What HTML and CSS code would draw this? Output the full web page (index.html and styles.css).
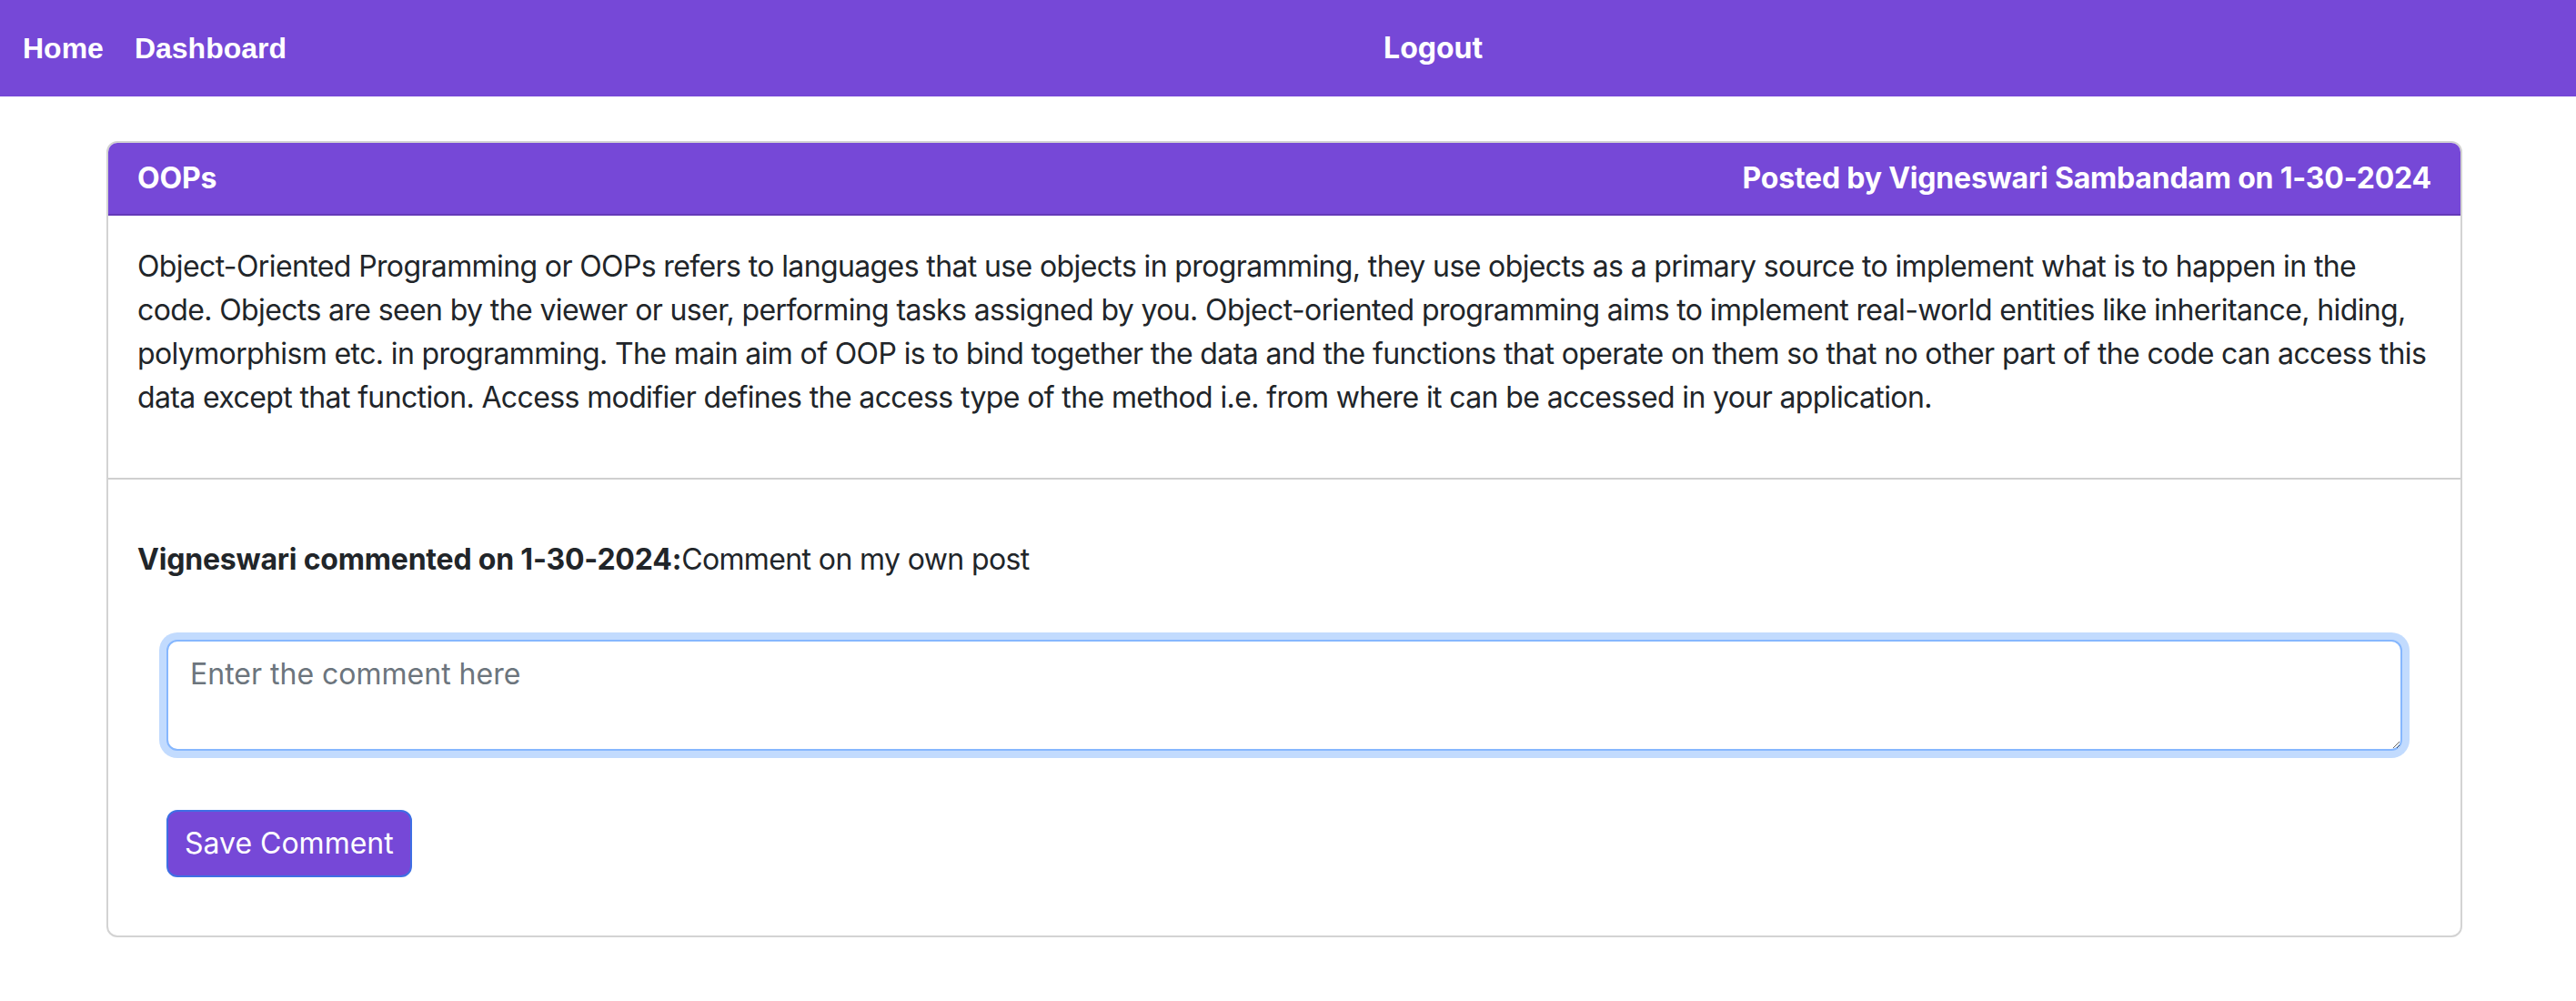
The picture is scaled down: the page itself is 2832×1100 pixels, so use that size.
FILE: index.html
```html
<!DOCTYPE html>
<html lang="en">
<head>
<meta charset="utf-8">
<title>OOPs</title>
<link rel="stylesheet" href="styles.css">
</head>
<body>
<nav class="topbar">
  <div class="nav-left">
    <a class="nav-link" href="#">Home</a>
    <a class="nav-link" href="#">Dashboard</a>
  </div>
  <a class="nav-logout" href="#">Logout</a>
</nav>
<main class="page">
  <section class="card">
    <header class="card-header">
      <span class="post-title">OOPs</span>
      <span class="post-meta">Posted by Vigneswari Sambandam on 1-30-2024</span>
    </header>
    <div class="card-body">
      <p class="post-text">Object-Oriented Programming or OOPs refers to languages that use objects in programming, they use objects as a primary source to implement what is to happen in the<br>code. Objects are seen by the viewer or user, performing tasks assigned by you. Object-oriented programming aims to implement real-world entities like inheritance, hiding,<br>polymorphism etc. in programming. The main aim of OOP is to bind together the data and the functions that operate on them so that no other part of the code can access this<br>data except that function. Access modifier defines the access type of the method i.e. from where it can be accessed in your application.</p>
    </div>
    <div class="card-footer">
      <p class="comment"><strong>Vigneswari commented on 1-30-2024:</strong>Comment on my own post</p>
      <form class="comment-form">
        <textarea class="comment-input" rows="2" placeholder="Enter the comment here" autofocus></textarea>
        <button type="button" class="btn-save">Save Comment</button>
      </form>
    </div>
  </section>
</main>
</body>
</html>
```
FILE: styles.css
```css
* { box-sizing: border-box; }
html, body { margin: 0; padding: 0; background: #fff; }
body {
  font-family: Inter, "Noto Sans", sans-serif;
  font-size: 32px;
  line-height: 48px;
  letter-spacing: -0.62px;
  color: #212529;
}
strong, b { letter-spacing: -0.2px; }
.topbar {
  height: 106px;
  background: #7648d7;
  display: flex;
  align-items: center;
  padding-left: 25px;
}
.nav-left { display: flex; gap: 34px; }
.nav-link {
  font-family: "Liberation Sans", Arial, sans-serif;
  font-weight: 700;
  letter-spacing: 0;
  color: #fff;
  text-decoration: none;
}
.nav-logout {
  margin-left: 1206px;
  font-weight: 700;
  letter-spacing: 0;
  color: #fff;
  text-decoration: none;
}
.page { padding: 49px 125px 0 117px; }
.card {
  border: 2px solid #d3d3d3;
  border-radius: 12px;
  overflow: hidden;
}
.card-header {
  background: #7648d7;
  color: #fff;
  font-weight: 700;
  letter-spacing: -0.2px;
  height: 80px;
  padding: 0 32px;
  display: flex;
  align-items: center;
  justify-content: space-between;
  border-bottom: 2px solid #6439b8;
}
.card-body { padding: 32px; border-bottom: 2px solid #cfcfcf; }
.post-text { margin: 0 -28px 32px 0; }
.card-footer { padding: 32px; }
.comment { margin: 32px 0; }
.comment-form { padding: 32px; display: flex; flex-direction: column; align-items: flex-start; gap: 65px; }
.comment-input {
  width: 100%;
  height: 122px;
  display: block;
  font: inherit;
  color: #212529;
  padding: 12px 24px;
  border: 2px solid #86b7fe;
  border-radius: 12px;
  box-shadow: 0 0 0 8px rgba(13, 110, 253, 0.25);
  outline: none;
  resize: vertical;
}
.comment-input::placeholder { color: #6c757d; }
.btn-save {
  font: inherit;
  color: #fff;
  background: #7648d7;
  border: 2px solid #3f6fe4;
  border-radius: 12px;
  height: 74px;
  padding: 0 18px;
  cursor: pointer;
}
```
